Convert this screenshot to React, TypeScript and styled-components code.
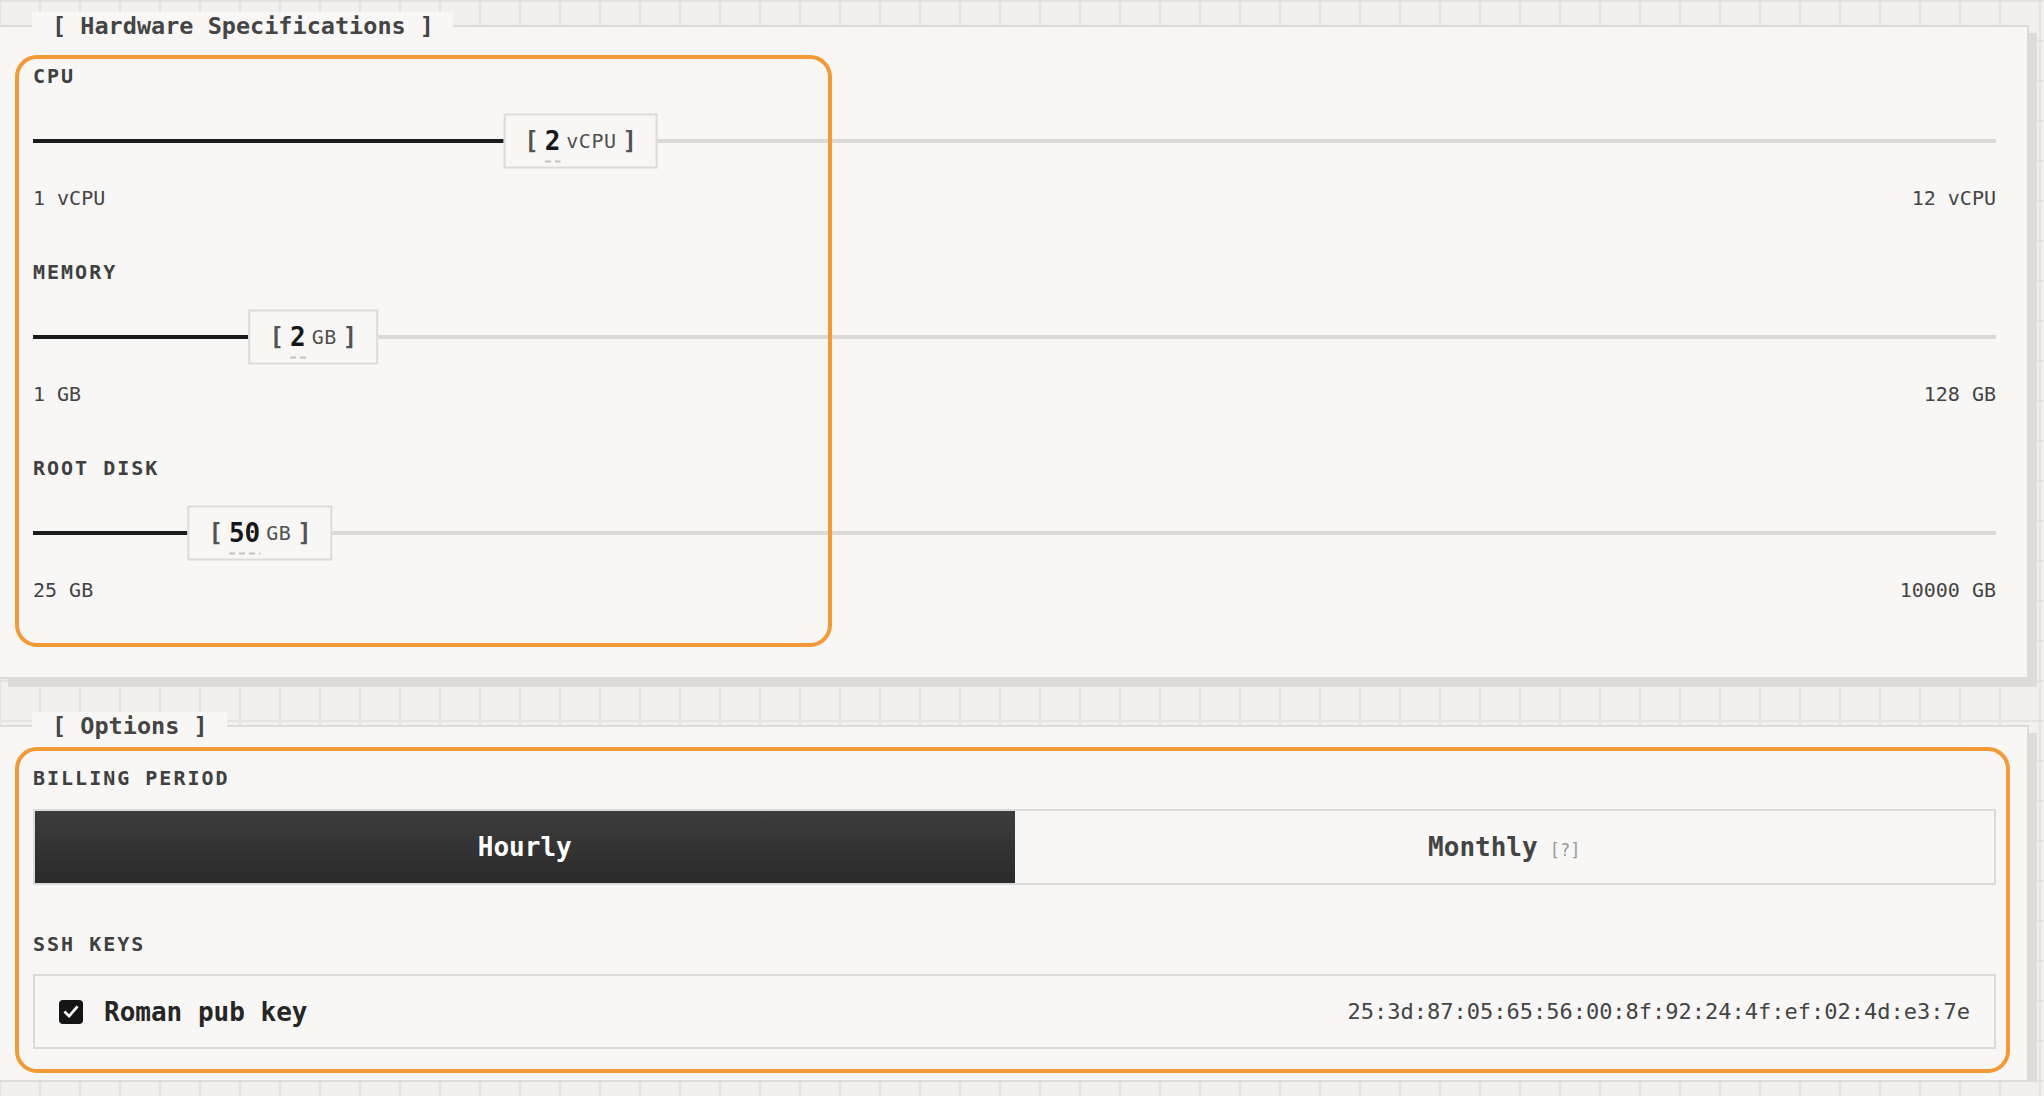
import React from "react";
import styled, { createGlobalStyle } from "styled-components";

const GlobalStyle = createGlobalStyle`
   html, body {
      margin: 0;
      padding: 0;
      overflow: hidden;
   }
   body {
      background-color: #f1f0ee;
      background-image:
         linear-gradient(#e4e3e1 2px, transparent 2px),
         linear-gradient(90deg, #e4e3e1 2px, transparent 2px);
      background-size: 40px 40px;
      background-position: -1px 0;
      font-family: "DejaVu Sans Mono", "Liberation Mono", monospace;
      color: #444;
   }
`;

const Page = styled.div`
   display: flex;
   flex-direction: column;
   padding: 25px 15px 0 0;
   gap: 46px;
`;

const Panel = styled.section`
   position: relative;
   display: flex;
   flex-direction: column;
   background: #f8f7f5;
   border: 2px solid #dcdbd9;
   border-left: none;
   box-shadow: 8px 8px 0 #dddcda;
   padding: 0 31px ${(p: { $bottom: number }) => p.$bottom}px 33px;
`;

const Title = styled.h2`
   align-self: flex-start;
   margin: -15px 0 0 -1px;
   padding: 0 19px 0 20px;
   background: #f8f7f5;
   font-size: 23.5px;
   line-height: 28px;
   font-weight: bold;
   color: #454545;
   white-space: pre;
`;

const Highlight = styled.div<{ $top: number; $left: number; $w: number; $h: number }>`
   position: absolute;
   top: ${(p) => p.$top}px;
   left: ${(p) => p.$left}px;
   width: ${(p) => p.$w}px;
   height: ${(p) => p.$h}px;
   box-sizing: border-box;
   border: 4px solid #f29a38;
   border-radius: 22px;
   pointer-events: none;
`;

const Label = styled.div<{ $mt: number }>`
   margin-top: ${(p) => p.$mt}px;
   font-size: 20px;
   line-height: 24px;
   font-weight: bold;
   letter-spacing: 2px;
   color: #404040;
`;

const SliderRow = styled.div`
   position: relative;
   height: 55px;
   margin-top: 25px;
   display: flex;
   align-items: center;
`;

const Track = styled.div`
   position: relative;
   flex: 1;
   height: 4px;
   background: #dad9d7;
`;

const Fill = styled.div`
   height: 100%;
   background: #1b1b1b;
`;

const Thumb = styled.div`
   position: absolute;
   top: 50%;
   transform: translate(-50%, -50%);
   height: 55px;
   box-sizing: border-box;
   display: flex;
   align-items: center;
   gap: 6px;
   padding: 0 19px;
   background: #f8f7f5;
   border: 2px solid #dcdbd9;
   white-space: nowrap;
`;

const Bracket = styled.span`
   font-size: 24px;
   line-height: 26px;
   font-weight: bold;
   color: #535353;
`;

const Num = styled.span`
   position: relative;
   font-size: 26px;
   line-height: 26px;
   font-weight: bold;
   color: #161616;

   &::after {
      content: "";
      position: absolute;
      left: 0;
      right: 0;
      top: calc(100% + 7px);
      height: 2px;
      background: repeating-linear-gradient(90deg, #c2c1bf 0 6px, transparent 6px 10px);
   }
`;

const Unit = styled.span`
   font-size: 20px;
   line-height: 26px;
   letter-spacing: 0.5px;
   color: #505050;
`;

const Range = styled.div`
   display: flex;
   justify-content: space-between;
   margin-top: 18px;
   font-size: 20px;
   line-height: 24px;
   color: #444;
   white-space: pre;
`;

const Segmented = styled.div`
   display: grid;
   grid-template-columns: 1fr 1fr;
   height: 76px;
   margin-top: 19px;
   box-sizing: border-box;
   border: 2px solid #dcdbd9;
`;

const Segment = styled.div<{ $active?: boolean }>`
   display: flex;
   align-items: baseline;
   justify-content: center;
   padding-top: 21px;
   box-sizing: border-box;
   background: ${(p) => (p.$active ? "linear-gradient(#3d3d3d, #2a2a2a)" : "#f8f7f5")};
   color: ${(p) => (p.$active ? "#ffffff" : "#444")};
   font-size: 26px;
   line-height: 30px;
   font-weight: bold;
`;

const Hint = styled.span`
   margin-left: 12px;
   font-size: 17px;
   font-weight: normal;
   color: #9a9a9a;
`;

const KeyBox = styled.div`
   display: flex;
   align-items: center;
   justify-content: space-between;
   height: 75px;
   margin-top: 18px;
   padding: 0 24px;
   box-sizing: border-box;
   border: 2px solid #dcdbd9;
`;

const KeyName = styled.label`
   display: flex;
   align-items: center;
   gap: 21px;
   font-size: 26px;
   font-weight: bold;
   color: #262626;
`;

const Check = styled.span`
   display: inline-flex;
   align-items: center;
   justify-content: center;
   width: 24px;
   height: 24px;
   border-radius: 4px;
   background: #151515;
`;

const Fingerprint = styled.span`
   font-size: 22px;
   color: #444;
`;

const specs = [
   { label: "CPU", value: 2, unit: "vCPU", min: 1, max: 12 },
   { label: "MEMORY", value: 2, unit: "GB", min: 1, max: 128 },
   { label: "ROOT DISK", value: 50, unit: "GB", min: 25, max: 10000 },
];

function SpecSlider({ spec, first }: { spec: (typeof specs)[number]; first: boolean }) {
   // log scale, same as the real slider
   const pct = (Math.log(spec.value / spec.min) / Math.log(spec.max / spec.min)) * 100;
   return (
      <>
         <Label $mt={first ? 24 : 50}>{spec.label}</Label>
         <SliderRow>
            <Track>
               <Fill style={{ width: pct + "%" }} />
               <Thumb style={{ left: pct + "%" }}>
                  <Bracket>[</Bracket>
                  <Num>{spec.value}</Num>
                  <Unit>{spec.unit}</Unit>
                  <Bracket>]</Bracket>
               </Thumb>
            </Track>
         </SliderRow>
         <Range>
            <span>{`${spec.min} ${spec.unit}`}</span>
            <span>{`${spec.max} ${spec.unit}`}</span>
         </Range>
      </>
   );
}

export default function App() {
   return (
      <>
         <GlobalStyle />
         <Page>
            <Panel $bottom={75}>
               <Title>[ Hardware Specifications ]</Title>
               {specs.map((s, i) => (
                  <SpecSlider key={s.label} spec={s} first={i == 0} />
               ))}
               <Highlight $top={28} $left={15} $w={817} $h={592} />
            </Panel>

            <Panel $bottom={31}>
               <Title>[ Options ]</Title>
               <Label $mt={26}>BILLING PERIOD</Label>
               <Segmented>
                  <Segment $active>Hourly</Segment>
                  <Segment>
                     Monthly<Hint>[?]</Hint>
                  </Segment>
               </Segmented>
               <Label $mt={47}>SSH KEYS</Label>
               <KeyBox>
                  <KeyName>
                     <Check>
                        <svg width="18" height="18" viewBox="0 0 24 24" fill="none">
                           <path d="M4.5 12.5l5 5L19.5 6" stroke="#fff" strokeWidth="3.6" strokeLinecap="square" />
                        </svg>
                     </Check>
                     Roman pub key
                  </KeyName>
                  <Fingerprint>25:3d:87:05:65:56:00:8f:92:24:4f:ef:02:4d:e3:7e</Fingerprint>
               </KeyBox>
               <Highlight $top={20} $left={15} $w={1995} $h={326} />
            </Panel>
         </Page>
      </>
   );
}
